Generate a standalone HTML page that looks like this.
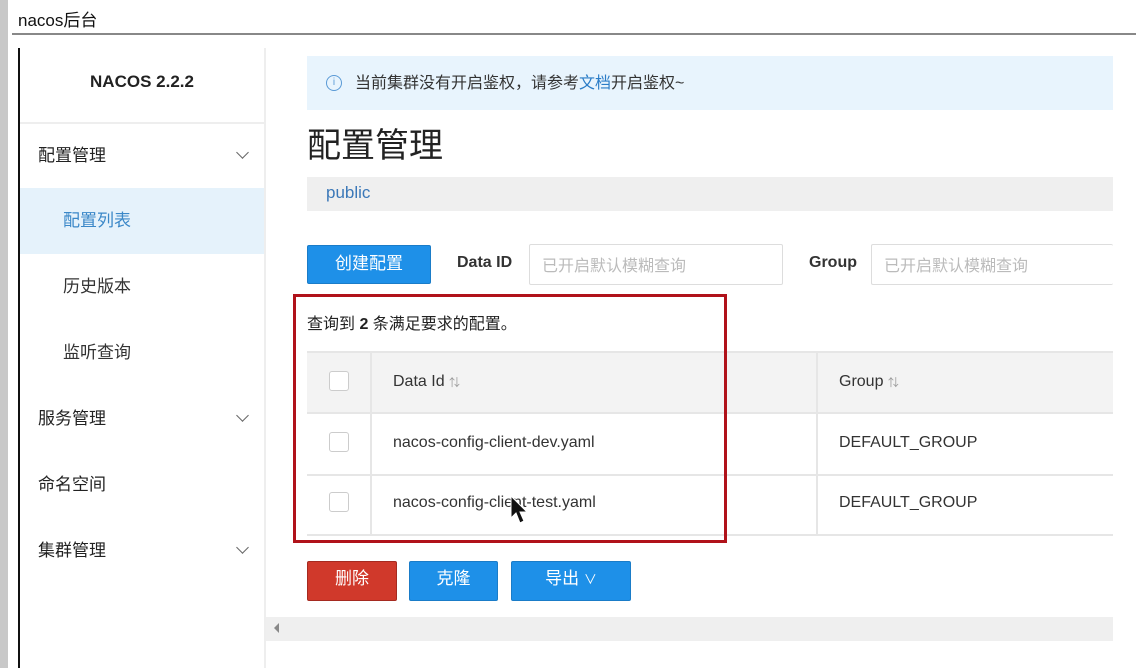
<!DOCTYPE html><html><head><meta charset="utf-8"><style>
*{box-sizing:border-box;margin:0;padding:0}
body{width:1136px;height:668px;background:#fff;position:relative;overflow:hidden;font-family:"Liberation Sans","Noto Sans CJK SC",sans-serif;color:#333}
.a{position:absolute}
.cb{position:absolute;width:20px;height:20px;border:1px solid #ccc;border-radius:3px;background:#fff;left:329px}
.chev{position:absolute;width:9px;height:9px;border-right:1.5px solid #666;border-bottom:1.5px solid #666;transform:rotate(45deg)}
.btn{position:absolute;color:#fff;font-size:17px;text-align:center;border-radius:2px}
</style></head><body>
<div class="a" style="left:0;top:0;width:8px;height:668px;background:#c8c8c8"></div>
<div class="a" style="left:18px;top:6px;font-size:17px;color:#111">nacos后台</div>
<div class="a" style="left:12px;top:33px;width:1124px;height:2px;background:#888"></div>
<div class="a" style="left:18px;top:48px;width:2px;height:620px;background:#111"></div>
<div class="a" style="left:264px;top:48px;width:2px;height:620px;background:#eee"></div>
<div class="a" style="left:20px;top:72px;width:244px;text-align:center;font-weight:bold;font-size:17px;color:#222">NACOS 2.2.2</div>
<div class="a" style="left:20px;top:122px;width:244px;height:2px;background:#eee"></div>
<div class="a" style="left:38px;top:141px;font-size:17px;color:#222">配置管理</div><div class="chev" style="left:238px;top:148px"></div>
<div class="a" style="left:20px;top:188px;width:244px;height:66px;background:#e5f2fb"></div>
<div class="a" style="left:63px;top:206px;font-size:17px;color:#3b88c8">配置列表</div>
<div class="a" style="left:63px;top:272px;font-size:17px;color:#333">历史版本</div>
<div class="a" style="left:63px;top:338px;font-size:17px;color:#333">监听查询</div>
<div class="a" style="left:38px;top:404px;font-size:17px;color:#222">服务管理</div><div class="chev" style="left:238px;top:411px"></div>
<div class="a" style="left:38px;top:470px;font-size:17px;color:#222">命名空间</div>
<div class="a" style="left:38px;top:536px;font-size:17px;color:#222">集群管理</div><div class="chev" style="left:238px;top:543px"></div>
<div class="a" style="left:307px;top:56px;width:806px;height:54px;background:#e8f4fd"></div>
<div class="a" style="left:326px;top:75px;width:16px;height:16px;border:1.5px solid #5a9ad6;border-radius:50%;color:#5a9ad6;font-size:10px;text-align:center;line-height:13px">i</div>
<div class="a" style="left:355px;top:69px;font-size:16px;color:#333">当前集群没有开启鉴权，请参考<span style="color:#2a7cc7">文档</span>开启鉴权~</div>
<div class="a" style="left:307px;top:118px;font-size:34px;color:#222">配置管理</div>
<div class="a" style="left:307px;top:177px;width:806px;height:34px;background:#efefef"></div>
<div class="a" style="left:326px;top:183px;font-size:17px;color:#3b78b8">public</div>
<div class="btn" style="left:307px;top:245px;width:124px;height:39px;line-height:35px;background:#1e90e8;border:1px solid #1a7cc8">创建配置</div>
<div class="a" style="left:457px;top:254px;font-size:16px;font-weight:bold;color:#333">Data ID</div>
<div class="a" style="left:529px;top:244px;width:254px;height:41px;border:1px solid #ddd;border-radius:2px;padding:7px 12px;font-size:16px;color:#bbb">已开启默认模糊查询</div>
<div class="a" style="left:809px;top:254px;font-size:16px;font-weight:bold;color:#333">Group</div>
<div class="a" style="left:871px;top:244px;width:242px;height:41px;border:1px solid #ddd;border-right:none;border-radius:2px;padding:7px 12px;font-size:16px;color:#bbb">已开启默认模糊查询</div>
<div class="a" style="left:307px;top:310px;font-size:16px;color:#222">查询到 <b>2</b> 条满足要求的配置。</div>
<div class="a" style="left:307px;top:351px;width:806px;height:63px;background:#f3f3f3;border-top:2px solid #e6e6e6;border-bottom:2px solid #e6e6e6"></div>
<div class="a" style="left:307px;top:474px;width:806px;height:2px;background:#e6e6e6"></div>
<div class="a" style="left:307px;top:534px;width:806px;height:2px;background:#e6e6e6"></div>
<div class="a" style="left:370px;top:351px;width:2px;height:184px;background:#e6e6e6"></div>
<div class="a" style="left:816px;top:351px;width:2px;height:184px;background:#e6e6e6"></div>
<div class="cb" style="top:371px"></div><div class="cb" style="top:432px"></div><div class="cb" style="top:492px"></div>
<div class="a" style="left:393px;top:373px;font-size:16px">Data Id <span style="font-size:11px;color:#999">⇅</span></div>
<div class="a" style="left:839px;top:373px;font-size:16px">Group <span style="font-size:11px;color:#999">⇅</span></div>
<div class="a" style="left:393px;top:434px;font-size:16px">nacos-config-client-dev.yaml</div>
<div class="a" style="left:839px;top:434px;font-size:16px">DEFAULT_GROUP</div>
<div class="a" style="left:393px;top:494px;font-size:16px">nacos-config-client-test.yaml</div>
<div class="a" style="left:839px;top:494px;font-size:16px">DEFAULT_GROUP</div>
<div class="a" style="left:293px;top:294px;width:434px;height:249px;border:3px solid #b0121a"></div>
<svg class="a" style="left:510px;top:495px" width="22" height="32"><path d="M1 1 L1 23 L6 18 L10 28 L14 26 L10 17 L17 17 Z" fill="#111" stroke="#fff" stroke-width="1"/></svg>
<div class="btn" style="left:307px;top:561px;width:90px;height:40px;line-height:34px;background:#d0392b;border:1px solid #a52a20">删除</div>
<div class="btn" style="left:409px;top:561px;width:89px;height:40px;line-height:34px;background:#1e90e8;border:1px solid #1a7cc8">克隆</div>
<div class="btn" style="left:511px;top:561px;width:120px;height:40px;line-height:34px;background:#1e90e8;border:1px solid #1a7cc8">导出 <span style="font-size:13px">∨</span></div>
<div class="a" style="left:266px;top:617px;width:847px;height:24px;background:#efefef"></div>
<div class="a" style="left:274px;top:623px;width:0;height:0;border-top:5px solid transparent;border-bottom:5px solid transparent;border-right:5px solid #888"></div>
</body></html>
